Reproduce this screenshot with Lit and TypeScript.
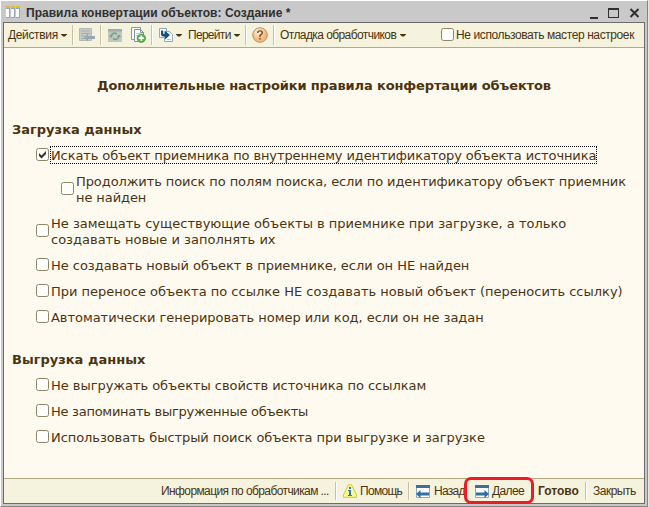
import { LitElement, html, css, svg } from "lit";
import { customElement, property } from "lit/decorators.js";

@customElement("check-row")
class CheckRow extends LitElement {
  @property({ type: Boolean }) checked = false;
  @property({ type: Boolean, reflect: true }) focused = false;
  static styles = css`
    :host { display: flex; align-items: center; gap: 2px; white-space: nowrap; }
    .box { box-sizing: border-box; flex: none; width: 13px; height: 13px; margin-bottom: 2px; border: 1px solid #8e8565; border-radius: 2.5px; background: #fff; }
    svg { display: block; }
    .label { line-height: 16px; transform: translateY(var(--label-shift, 1px)); }
    :host([focused]) .label { height: 16px; line-height: 18px; transform: none; outline: 1px dotted #000; }
  `;
  render() {
    return html`<span class="box">${this.checked
      ? html`<svg width="11" height="11" viewBox="0 0 11 11"><path d="M2 4v3l2.500 2.500L9 5V2L4.500 6.500z" fill="#383428" /></svg>` : ""}</span
      ><span class="label"><slot></slot></span>`;
  }
}

const icon = (w: number, h: number, body: unknown) =>
  html`<svg width=${w} height=${h} viewBox="0 0 ${w} ${h}">${body}</svg>`;

const tableIcon = icon(14, 12, svg`<path d="M0 0h4v12H0zM5 0h4v12H5zM10 0h4v12h-4z" fill="#8fabb8"/><path d="M0 0h4v2H0zM5 0h4v2H5zM10 0h4v2h-4z" fill="#e8b92c"/><path d="M0 3h3v8H0zM5 3h3v8H5zM10 3h3v8h-3z" fill="#fff"/>`);
const listIcon = icon(16, 16, svg`<path d="M.5 1.500h12v12H.5z" fill="#c9ccc4" stroke="#b2b8b5"/><path d="M2 4h9M2 6.500h9M2 9h4M2 11.500h4" stroke="#a3abac"/><path d="M5 10.500l4-4v2.500h7v3H9v2.500z" fill="#98a8b0"/>`);
const refreshIcon = icon(14, 13, svg`<path d="M0 0h14v13H0z" fill="#c0c8bf"/><path d="M0 0h14v2.500H0z" fill="#a0abaa"/><path d="M3 7q1-3 4-3l2 1M11 7.500q-1 3-4 3l-2-1" stroke="#7fa083" stroke-width="1.400" fill="none"/><path d="M.8 6.500h4.400L3 9zM8.800 8h4.400L11 5.500z" fill="#7fa083"/>`);
const copyIcon = icon(15, 16, svg`<path d="M.5.500h9v12h-9z" fill="#fff" stroke="#7f9cab"/><path d="M3.500 2.500h6l3 3v9h-9z" fill="#fff" stroke="#7392a3"/><path d="M9.500 2.500v3h3" fill="none" stroke="#7392a3"/><path d="M5 6.500h4M5 8.500h3" stroke="#c3d0d6"/><circle cx="10.300" cy="11.200" r="4.200" fill="#5bb54e" stroke="#438e3b" stroke-width=".7"/><path d="M7.700 11.200h5.200M10.300 8.600v5.200" stroke="#fff" stroke-width="1.700"/>`);
const goIcon = icon(14, 14, svg`<path d="M.5.500h7v9h-7zM5.500 3.500h5l3 3v7h-8z" fill="#fff" stroke="#8faabb"/><path d="M8 11.500h4M10 5h2" stroke="#b1c3cd"/><path d="M2 2.500v3.500q0 2.500 2.500 2.500H6v3l5-4.500-5-4v3H5Q4.200 6 4.200 5V2.500z" fill="#174f80"/>`);
const helpIcon = icon(16, 16, svg`<defs><radialGradient id="g" cx=".4" cy=".3"><stop offset="0" stop-color="#fff3da"/><stop offset="1" stop-color="#f6b978"/></radialGradient></defs><circle cx="8" cy="8" r="7.300" fill="url(#g)" stroke="#a9947f"/><path d="M5.700 6q0-2.100 2.300-2.100T10.300 6Q10.300 7 8 8.300V10M8 11v1.500" fill="none" stroke="#6d4929" stroke-width="1.400"/>`);
const infoIcon = icon(14, 14, svg`<path d="M5.500.800h3l5 10v2.500H.5v-2.500z" fill="#fdf98a" stroke="#c8c65e" stroke-linejoin="round"/><path d="M6 3h2v2H6zM5 6h3v5h1v1H5v-1h1V7H5z" fill="#3378b5"/>`);
const navIcon = (back: boolean) => icon(14, 13, svg`<path d="M.5.500h13v12H.5z" fill="#fff" stroke="#91a9bb"/><path d="M0 0h14v3H0z" fill="#416f94"/><path transform=${back ? "" : "matrix(-1 0 0 1 14 0)"} d="M0 9l4.500-4V7.500H13v3H4.500V13z" fill="#316f9e"/>`);

@customElement("app-root")
class AppRoot extends LitElement {
  static styles = css`
    :host { display: block; width: 649px; height: 507px; overflow: hidden; background: #ece9d8; color: #4a3410; }
    *, *::after { box-sizing: border-box; }
    svg { display: block; flex: none; }
    .window { width: 648px; height: 507px; display: flex; flex-direction: column; background: #c9c9c9; border: 1px solid #848484; border-top-color: #fff; border-left-color: #fff; padding: 0 2px 2px; }
    .title { height: 21px; flex: none; display: flex; align-items: center; padding: 3px 5px 0 3px; font: bold 12px/16px "Liberation Sans", sans-serif; color: #303030; white-space: nowrap; }
    .title > svg:first-child { margin-bottom: 2px; }
    .title .name { margin-left: 6px; flex: 1; letter-spacing: .02px; }
    .frame { flex: 1; display: flex; flex-direction: column; border: 1px solid #6c6c6c; background: #fffaf0; min-height: 0; }
    .bar, .foot { flex: none; display: flex; align-items: center; background: #f5f2dd; font: 12px/16px "Liberation Sans", sans-serif; white-space: nowrap; }
    .bar { height: 25px; border-bottom: 1px solid #b3a982; padding-left: 4px; }
    .foot { height: 25px; border-top: 1px solid #b3a982; padding-left: 157px; }
    .bar > span, .foot span, .foot b { flex: none; }
    .arrow { width: 6px; height: 3px; flex: none; background: #4a3410; clip-path: polygon(0 0, 100% 0, 100% 33%, 66% 100%, 34% 100%, 0 33%); margin: 0 5px 0 3px; }
    .sep { width: 1px; height: 18px; background: #c8c0a0; box-shadow: 1px 0 #fff; flex: none; margin-right: 6px; }
    .bar .sep { height: 20px; }
    .list { margin-right: 5px; }
    .refresh { margin: 0 9px 0 1px; }
    .copy { margin-right: 5px; }
    .go { margin-left: 1px; }
    .help { margin-right: 5px; }
    .actions { width: 50px; letter-spacing: -.35px; }
    .goto { width: 43px; letter-spacing: -.7px; margin-left: 1px; }
    .debug { width: 117px; letter-spacing: -.58px; }
    .opt { margin-left: auto; margin-right: 10px; letter-spacing: -.4px; --label-shift: 0px; }
    .info { width: 174px; letter-spacing: -.6px; }
    .foot .sep { margin-right: 7px; }
    .helptext { width: 48px; margin-left: 3px; letter-spacing: -.7px; }
    .back { width: 41px; margin-left: 4px; letter-spacing: -.7px; }
    .forward { width: 46px; margin-left: 3px; letter-spacing: -.6px; }
    .foot b { width: 47px; }
    .close { letter-spacing: -.5px; }
    .body { flex: 1; font: 13px/16px "DejaVu Sans", sans-serif; padding-left: 8px; min-height: 0; }
    h1, h2 { font-size: 13px; line-height: 16px; margin: 0; white-space: nowrap; }
    h1 { margin: 30px 0 28px 85px; letter-spacing: -.13px; }
    .rows { margin: 9px 0 27px 24px; display: grid; gap: 10px; }
    .sub { margin-left: 25px; letter-spacing: -.085px; }
    .t1 { letter-spacing: -.04px; }
    .t2 { letter-spacing: -.07px; }
    .t3 { letter-spacing: -.105px; }
    .t4 { letter-spacing: -.27px; }
    .next { position: relative; display: flex; align-items: center; }
    .next::after { content: ""; position: absolute; left: -11px; top: -6px; width: 70px; height: 27px; border: 3px solid #ed1c24; border-radius: 7px; }
  `;
  render() {
    return html`<div class="window">
      <div class="title">${tableIcon}<span class="name">Правила конвертации объектов: Создание *</span>
        <svg width="50" height="12" viewBox="0 0 50 12"><path d="M0 10h8v2H0zM18 1h11v10H18zM19 3v7h9V3z" fill="#303030" fill-rule="evenodd"/><path d="M40.500 2l8 8M48.500 2l-8 8" stroke="#303030" stroke-width="2"/></svg></div>
      <div class="frame">
        <div class="bar">
          <span class="actions">Действия</span><i class="arrow"></i><i class="sep"></i>
          <span class="list">${listIcon}</span><i class="sep"></i>
          <span class="refresh">${refreshIcon}</span><span class="copy">${copyIcon}</span><i class="sep"></i>
          <span class="go">${goIcon}</span><i class="arrow"></i><span class="goto">Перейти</span><i class="arrow"></i><i class="sep"></i>
          <span class="help">${helpIcon}</span><i class="sep"></i>
          <span class="debug">Отладка обработчиков</span><i class="arrow"></i>
          <check-row class="opt">Не использовать мастер настроек</check-row>
        </div>
        <div class="body">
          <h1>Дополнительные настройки правила конфертации объектов</h1>
          <h2>Загрузка данных</h2>
          <div class="rows">
            <check-row class="t3" checked focused>Искать объект приемника по внутреннему идентификатору объекта источника</check-row>
            <check-row class="sub">Продолжить поиск по полям поиска, если по идентификатору объект приемник<br>не найден</check-row>
            <check-row>Не замещать существующие объекты в приемнике при загрузке, а только<br>создавать новые и заполнять их</check-row>
            <check-row class="t1">Не создавать новый объект в приемнике, если он НЕ найден</check-row>
            <check-row>При переносе объекта по ссылке НЕ создавать новый объект (переносить ссылку)</check-row>
            <check-row class="t1">Автоматически генерировать номер или код, если он не задан</check-row>
          </div>
          <h2>Выгрузка данных</h2>
          <div class="rows">
            <check-row class="t1">Не выгружать объекты свойств источника по ссылкам</check-row>
            <check-row class="t4">Не запоминать выгруженные объекты</check-row>
            <check-row class="t2">Использовать быстрый поиск объекта при выгрузке и загрузке</check-row>
          </div>
        </div>
        <div class="foot">
          <span class="info">Информация по обработчикам ...</span><i class="sep"></i>
          ${infoIcon}<span class="helptext">Помощь</span><i class="sep"></i>
          ${navIcon(true)}<span class="back">Назад</span>
          <span class="next">${navIcon(false)}<span class="forward">Далее</span></span>
          <b>Готово</b><i class="sep"></i><span class="close">Закрыть</span>
        </div>
      </div>
    </div>`;
  }
}
